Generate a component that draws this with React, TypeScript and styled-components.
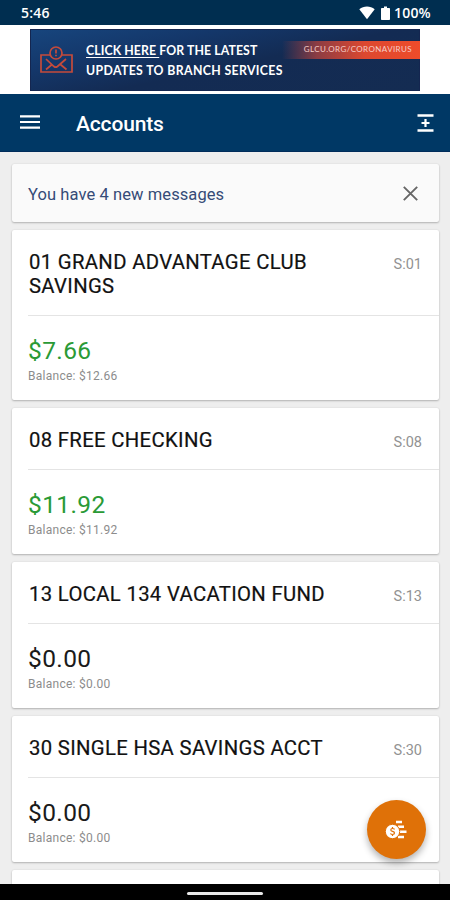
import React from "react";
import styled, { createGlobalStyle } from "styled-components";

const Global = createGlobalStyle`
  * { box-sizing: border-box; }
  html, body { margin: 0; padding: 0; background: #eee; }
  body { font-family: Roboto, "Liberation Sans", sans-serif; overflow: hidden; }
`;

const Screen = styled.div`
  position: relative;
  width: 450px;
  height: 900px;
  display: flex;
  flex-direction: column;
  overflow: hidden;
  background: #eeeeee;
`;

const StatusBar = styled.div`
  flex: none;
  height: 25px;
  padding: 1px 18px 0 21px;
  display: flex;
  align-items: center;
  background: #002e50;
  color: #fff;
  font: 600 14px/20px "Open Sans", sans-serif;
`;

const Clock = styled.span`
  flex: 1;
  letter-spacing: 0.2px;
`;

const Percent = styled.span`
  width: 38px;
  letter-spacing: 0.2px;
  white-space: nowrap;
`;

const WifiIcon = styled.svg`
  width: 16px;
  height: 14px;
  margin-right: 6px;
`;

const BatteryIcon = styled.svg`
  width: 9px;
  height: 15px;
  margin-right: 4px;
`;

const BannerStrip = styled.div`
  flex: none;
  height: 69px;
  padding: 4px 30px 3px 30px;
  background: #fff;
`;

const Banner = styled.div`
  height: 62px;
  display: flex;
  background: linear-gradient(168deg, #17457d 0%, #14376a 28%, #132b53 55%, #142c52 100%);
  border: 1px solid #142650;
  color: #fff;
`;

const MailIcon = styled.svg`
  flex: none;
  width: 34px;
  height: 30px;
  margin: 15px 0 0 8px;
`;

const BannerText = styled.div`
  flex: none;
  width: 206px;
  margin: 11px 0 0 13px;
  font: 700 12.3px/20px Lato, sans-serif;
  white-space: nowrap;
`;

const BannerLine = styled.div<{ $spacing: number }>`
  letter-spacing: ${(p) => p.$spacing}px;
`;

const BannerLink = styled.span`
  text-decoration: underline;
  text-decoration-thickness: 1px;
  text-underline-offset: 2px;
`;

const BannerTag = styled.div`
  flex: 1;
  height: 18px;
  margin: 11px -1px 0 -10px;
  padding-right: 8px;
  text-align: right;
  background: linear-gradient(90deg, rgba(226, 72, 43, 0) 0%, #8b3c43 25%, #dd4830 60%, #ee4c2a 100%);
  color: #f6cdc8;
  font: 400 8px/17px Lato, sans-serif;
  letter-spacing: 0.4px;
  white-space: nowrap;
`;

const AppBar = styled.header`
  flex: none;
  height: 58px;
  padding: 0 16px 0 20px;
  display: flex;
  align-items: center;
  background: #003865;
  border-bottom: 1px solid #002c5a;
  color: #fff;
`;

const MenuIcon = styled.svg`
  width: 20px;
  height: 14px;
  margin-top: -1px;
`;

const PageTitle = styled.h1`
  flex: 1;
  margin: 2px 0 0 36px;
  font-size: 21px;
  font-weight: 500;
  line-height: 28px;
  letter-spacing: -0.15px;
`;

const ExpandIcon = styled.svg`
  width: 17px;
  height: 20px;
`;

const Content = styled.main`
  flex: 1;
  min-height: 0;
  overflow: hidden;
  padding: 12px 11px 0 12px;
  display: flex;
  flex-direction: column;
  gap: 8px;
`;

const Card = styled.section`
  flex: none;
  background: #fff;
  border-radius: 2px;
  box-shadow: 0 1px 2px rgba(0, 0, 0, 0.24), 0 0 2px rgba(0, 0, 0, 0.08);
`;

const Message = styled(Card)`
  height: 58px;
  padding: 0 21px 0 16px;
  display: flex;
  align-items: center;
  justify-content: space-between;
  background: #fafafa;
  color: #354b77;
  font-size: 16.5px;
  line-height: 24px;
`;

const MessageText = styled.span`
  margin-top: 4px;
  letter-spacing: 0.09px;
`;

const CloseIcon = styled.svg`
  width: 15px;
  height: 15px;
`;

const CardHead = styled.div`
  margin-left: 16px;
  padding: 20px 17px 17px 0;
  display: flex;
  justify-content: space-between;
  border-bottom: 1px solid #e4e4e4;
`;

const AccountName = styled.h2`
  margin: 0 0 0 1px;
  width: 310px;
  font-size: 20.3px;
  font-weight: 400;
  line-height: 24px;
  color: #111;
  letter-spacing: 0.33px;
  -webkit-text-stroke: 0.2px #111;
`;

const Suffix = styled.span`
  margin-top: 5px;
  font-size: 14.5px;
  line-height: 19px;
  color: #929292;
`;

const CardBody = styled.div`
  height: 84px;
  padding: 20px 16px 0;
`;

const Amount = styled.div<{ $positive: boolean }>`
  font-size: 24.5px;
  line-height: 30px;
  letter-spacing: 0.4px;
  color: ${(p) => (p.$positive ? "#2a9a36" : "#1a1a1a")};
`;

const Balance = styled.div`
  margin-top: 2px;
  font-size: 12px;
  line-height: 16px;
  letter-spacing: 0.26px;
  color: #8c8c8c;
`;

const NextCard = styled(Card)`
  height: 40px;
`;

const NavBar = styled.footer`
  flex: none;
  height: 16px;
  display: flex;
  justify-content: center;
  align-items: center;
  background: #000;
`;

const NavHandle = styled.div`
  width: 76px;
  height: 3px;
  margin-top: 2px;
  border-radius: 2px;
  background: #e8e8e8;
`;

const Fab = styled.button`
  position: absolute;
  right: 24px;
  bottom: 41px;
  width: 59px;
  height: 59px;
  padding: 0 1px 0 0;
  border: 0;
  border-radius: 50%;
  display: flex;
  align-items: center;
  justify-content: center;
  background: #df7108;
  box-shadow: 0 4px 7px rgba(0, 0, 0, 0.3);
`;

const accounts = [
  { name: "01 GRAND ADVANTAGE CLUB SAVINGS", suffix: "S:01", amount: "$7.66", balance: "$12.66" },
  { name: "08 FREE CHECKING", suffix: "S:08", amount: "$11.92", balance: "$11.92" },
  { name: "13 LOCAL 134 VACATION FUND", suffix: "S:13", amount: "$0.00", balance: "$0.00" },
  { name: "30 SINGLE HSA SAVINGS ACCT", suffix: "S:30", amount: "$0.00", balance: "$0.00" },
];

export default function App() {
  return (
    <>
      <Global />
      <Screen>
        <StatusBar>
          <Clock>5:46</Clock>
          <WifiIcon viewBox="0 0 16 14">
            <path d="M.3 3.2C4.7-.3 11.3-.3 15.7 3.2L8 13.3Z" fill="#fff" />
          </WifiIcon>
          <BatteryIcon viewBox="0 0 9 15">
            <path d="M3 .5h3v1.500h2.200q.8 0 .8.800v10.400q0 .8-.8.800H.8q-.8 0-.8-.8V2.800Q0 2 .8 2H3Z" fill="#fff" />
          </BatteryIcon>
          <Percent>100%</Percent>
        </StatusBar>
        <BannerStrip>
          <Banner>
            <MailIcon viewBox="0 0 34 30" fill="none" stroke="#c54b3b" strokeWidth="1.7">
              <path d="M11 10H2v17h31V10H22" />
              <circle cx="17" cy="8" r="6" />
              <path d="M17 4.500v4M17 9.800v1.500M7 14l8 7.500q1.700 1.300 3.400 0L27 14M7 24.500l6-5M27.500 24.500l-6-5" />
            </MailIcon>
            <BannerText>
              <BannerLine $spacing={0.09}>
                <BannerLink>CLICK HERE </BannerLink>FOR THE LATEST
              </BannerLine>
              <BannerLine $spacing={0.36}>UPDATES TO BRANCH SERVICES</BannerLine>
            </BannerText>
            <BannerTag>GLCU.ORG/CORONAVIRUS</BannerTag>
          </Banner>
        </BannerStrip>
        <AppBar>
          <MenuIcon viewBox="0 0 20 14">
            <path d="M0 1.300h20M0 7h20M0 12.700h20" stroke="#fff" strokeWidth="2.200" />
          </MenuIcon>
          <PageTitle>Accounts</PageTitle>
          <ExpandIcon viewBox="0 0 17 20" stroke="#fff" fill="none">
            <path d="M.5 2.500h16M.5 17.500h16" strokeWidth="2.400" />
            <path d="M8.500 6v8M4.500 10h8" strokeWidth="2.200" />
          </ExpandIcon>
        </AppBar>
        <Content>
          <Message>
            <MessageText>You have 4 new messages</MessageText>
            <CloseIcon viewBox="0 0 15 15">
              <path d="M.8.800l13.400 13.400M14.200.800L.8 14.200" stroke="#666" strokeWidth="1.900" />
            </CloseIcon>
          </Message>
          {accounts.map((a) => (
            <Card key={a.suffix}>
              <CardHead>
                <AccountName>{a.name}</AccountName>
                <Suffix>{a.suffix}</Suffix>
              </CardHead>
              <CardBody>
                <Amount $positive={a.amount !== "$0.00"}>{a.amount}</Amount>
                <Balance>Balance: {a.balance}</Balance>
              </CardBody>
            </Card>
          ))}
          <NextCard />
        </Content>
        <NavBar>
          <NavHandle />
        </NavBar>
        <Fab aria-label="Move money">
          <svg width="22" height="22" viewBox="0 0 22 22">
            <path d="M11 3h6M13 7.800h6M14 12.800h7.500M13 18h6" stroke="#fff" strokeWidth="2.600" />
            <circle cx="7.500" cy="12.500" r="7.200" fill="#fff" stroke="#df7108" strokeWidth="1" />
            <path d="M9.600 10.400q-.9-1-2.100-.9-1.700.1-1.700 1.400 0 1.100 1.800 1.500 1.900.4 1.900 1.700 0 1.300-1.900 1.400-1.500 0-2.200-1M7.500 8v1.400M7.500 15.500v1.400" fill="none" stroke="#df7108" strokeWidth="1.200" />
          </svg>
        </Fab>
      </Screen>
    </>
  );
}
